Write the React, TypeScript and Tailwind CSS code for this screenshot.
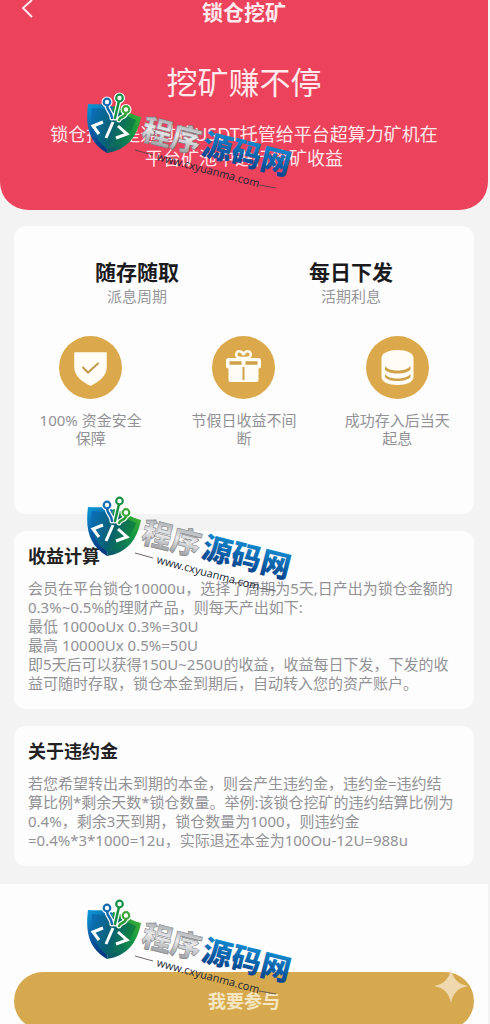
import React, { useId } from 'react';

type Props = { children?: React.ReactNode };

const stats = [
  { value: '随存随取', label: '派息周期' },
  { value: '每日下发', label: '活期利息' },
];

const calculation = [
  '会员在平台锁仓10000u，选择了周期为5天,日产出为锁仓金额的',
  '0.3%~0.5%的理财产品，则每天产出如下:',
  '最低 1000oUx 0.3%=30U',
  '最高 10000Ux 0.5%=50U',
  '即5天后可以获得150U~250U的收益，收益每日下发，下发的收',
  '益可随时存取，锁仓本金到期后，自动转入您的资产账户。',
];

const penalty = [
  '若您希望转出未到期的本金，则会产生违约金，违约金=违约结',
  '算比例*剩余天数*锁仓数量。举例:该锁仓挖矿的违约结算比例为',
  '0.4%，剩余3天到期，锁仓数量为1000，则违约金',
  '=0.4%*3*1000=12u，实际退还本金为100Ou-12U=988u',
];

function ShieldIcon() {
  return (
    <svg viewBox="0 0 63 63" className="w-full" aria-hidden="true">
      <path d="M16 17h31v14c0 9-7 14-15.500 18C23 45 16 40 16 31z" fill="#fffdf6" stroke="#fffdf6" strokeWidth="1.500" strokeLinejoin="round" />
      <path d="M24 31.500l5 5L39 27.500" fill="none" stroke="#c29a4e" strokeWidth="2" strokeLinecap="round" />
    </svg>
  );
}

function GiftIcon() {
  return (
    <svg viewBox="0 0 63 63" className="w-full" aria-hidden="true">
      <rect x="14" y="22" width="35" height="10.500" rx="2.500" fill="#fffdf6" />
      <path d="M16.500 31h30v13a2 2 0 0 1-2 2h-26a2 2 0 0 1-2-2z" fill="#fffdf6" />
      <path d="M31.500 22c-7 0-8-2-7-5 1.500-3 6-2 7 2 1-4 5.500-5 7-2 1 3 0 5-7 5z" fill="#d8a94c" stroke="#fffdf6" strokeWidth="2.500" />
      <path d="M17.500 27h12M33.500 27h12" stroke="#cfa14a" strokeWidth="3.500" />
      <path d="M31.500 31v13" stroke="#cfa14a" strokeWidth="2" />
    </svg>
  );
}

function CoinsIcon() {
  return (
    <svg viewBox="0 0 63 63" className="w-full" aria-hidden="true">
      <path d="M15.500 22c0-5 7-8 16-8s16 3 16 8v19c0 5-7 8-16 8s-16-3-16-8z" fill="#fffdf6" />
      <path d="M19 30c2 3 7 4.500 12.500 4.500S42 33 44.500 30v3.500c-2 2.500-7 4-13 4s-11-1.500-12.500-4zM19 38c2 3 7 4.500 12.500 4.500S42 41 44.500 38v3c-2 2.500-7 4-13 4s-11-1.500-12.500-4z" fill="#cfa14a" />
    </svg>
  );
}

const benefits = [
  { text: '100% 资金安全保障', icon: <ShieldIcon /> },
  { text: '节假日收益不间断', icon: <GiftIcon /> },
  { text: '成功存入后当天起息', icon: <CoinsIcon /> },
];

function Card({ children }: Props) {
  return <section className="rounded-xl bg-[#fdfdfd]">{children}</section>;
}

function InfoCard({ title, lines }: { title: string; lines: string[] }) {
  return (
    <Card>
      <div className="px-3.5 pt-3 pb-4">
        <h2 className="mb-2.5 text-[18px] leading-[26px] font-bold text-[#222]">{title}</h2>
        <p className="text-[15px] leading-[19px] whitespace-nowrap text-[#929296]">
          {lines.map((line) => (
            <span key={line} className="block">{line}</span>
          ))}
        </p>
      </div>
    </Card>
  );
}

function BrandMark() {
  const id = useId();
  const ref = (name: string) => `url(#${id}${name})`;

  return (
    <svg viewBox="0 0 230 115" className="h-[115px] w-[230px]" role="img" aria-label="程序源码网">
      <defs>
        <linearGradient id={`${id}blue`} x1="0" y1="0" x2="0.4" y2="1">
          <stop offset="0" stopColor="#0d9bd8" />
          <stop offset="0.6" stopColor="#0b559f" />
          <stop offset="1" stopColor="#073a80" />
        </linearGradient>
        <linearGradient id={`${id}green`} x1="1" y1="0" x2="0.2" y2="1">
          <stop offset="0" stopColor="#4cb82c" />
          <stop offset="0.5" stopColor="#119447" />
          <stop offset="1" stopColor="#0a5a68" />
        </linearGradient>
        <linearGradient id={`${id}inner`} x1="0" y1="0.2" x2="1" y2="0.5">
          <stop offset="0" stopColor="#0b6db5" />
          <stop offset="0.5" stopColor="#086070" />
          <stop offset="1" stopColor="#128a35" />
        </linearGradient>
        <linearGradient id={`${id}silver`} x1="0" y1="0" x2="0" y2="1">
          <stop offset="0.2" stopColor="#a5a8ab" />
          <stop offset="0.5" stopColor="#ececee" />
          <stop offset="0.9" stopColor="#94979a" />
        </linearGradient>
        <linearGradient id={`${id}word`} x1="0" y1="0" x2="0" y2="1">
          <stop offset="0.2" stopColor="#138bd0" />
          <stop offset="0.9" stopColor="#073f88" />
        </linearGradient>
      </defs>

      <path d="M13 19c10 1 18-1 25 3L32 68C15 58 10 43 13 19z" fill={ref('blue')} />
      <path d="M38 21c9 1 16 8 28 11C62 52 52 65 32 68z" fill={ref('green')} />
      <path d="M17 23c8 1 16 0 21 3 8 1 15 6 23 9-5 15-14 25-29 29C19 54 15 41 17 23z" fill={ref('inner')} />

      <g fill="none" strokeLinecap="round" strokeLinejoin="round">
        <g stroke="#fff" strokeWidth="5">
          <path d="M32 20c0 6 5 7 5 13M44 16l-4 17M51 28c-1 5-6 3-7 7" />
          <circle cx="32" cy="17" r="3" />
          <circle cx="44.500" cy="13" r="3" />
          <circle cx="51" cy="24.500" r="3" />
        </g>
        <path d="M32 20c0 6 5 7 5 13" stroke="#1268ad" strokeWidth="2.500" />
        <path d="M44 16l-4 17" stroke="#159044" strokeWidth="2.500" />
        <path d="M51 28c-1 5-6 3-7 7" stroke="#299b37" strokeWidth="2.500" />
        <circle cx="32" cy="17" r="3.300" fill="#fff" stroke="#146bb4" strokeWidth="2.200" />
        <circle cx="44.500" cy="13" r="3.300" fill="#fff" stroke="#159044" strokeWidth="2.200" />
        <circle cx="51" cy="24.500" r="3.300" fill="#fff" stroke="#3aa637" strokeWidth="2.200" />
      </g>
      <path d="M28 37l-10 4 6 8M38 37l-7 16M43 41l9 8-11 4" fill="none" stroke="#fff" strokeWidth="3" />

      <g transform="translate(65 54) rotate(14)">
        <text className="font-['Noto_Sans_CJK_SC',sans-serif] text-[30px] font-black" fill={ref('silver')} stroke="#77797c" strokeWidth="0.500">程序</text>
        <text x="62" className="font-['Noto_Sans_CJK_SC',sans-serif] text-[30px] font-black" fill={ref('word')}>源码网</text>
      </g>
      <text transform="translate(81 75) rotate(15)" className="font-['Open_Sans',sans-serif] text-[11px] font-medium" fill="#202733">www.cxyuanma.com</text>
      <path d="M60 65l18 5M184 100l17 3" stroke="#4b4046" strokeWidth="0.800" />
    </svg>
  );
}

export default function App() {
  return (
    <div className="relative min-h-screen overflow-hidden bg-[#f3f3f4] font-['Noto_Sans','Noto_Sans_CJK_SC',sans-serif]">
      <header className="mr-0.5 rounded-b-[28px] bg-[#ec425b] pb-10 text-center text-[#ffe9ec]">
        <div className="grid h-6 grid-cols-3 items-center px-4">
          <button type="button" aria-label="返回" className="w-6">
            <svg viewBox="0 0 24 24" className="size-6" fill="none" stroke="currentColor" strokeWidth="2">
              <path d="M16 0L7 8l9 9" />
            </svg>
          </button>
          <h1 className="text-[21px] leading-6 font-bold whitespace-nowrap">锁仓挖矿</h1>
        </div>
        <p className="mt-9 text-[31px] leading-[44px]">挖矿赚不停</p>
        <p className="mt-[18px] text-[18px] leading-6">
          锁仓挖矿是通过将USDT托管给平台超算力矿机在
          <br />
          平台矿池中进行挖矿收益
        </p>
      </header>

      <main className="mr-0.5 flex flex-col gap-[17px] px-3.5 pt-4 pb-[18px]">
        <Card>
          <div className="grid grid-cols-2 px-4 pt-8 text-center">
            {stats.map((item) => (
              <div key={item.value}>
                <p className="text-[21px] leading-7 font-bold text-[#1b1b1d]">{item.value}</p>
                <p className="text-[15px] leading-5 text-[#97979b]">{item.label}</p>
              </div>
            ))}
          </div>
          <ul className="mt-[30px] grid grid-cols-3 pb-[67px] text-center">
            {benefits.map((item) => (
              <li key={item.text} className="flex flex-col items-center gap-3">
                <span className="size-[63px] rounded-full bg-[#dba94b]">{item.icon}</span>
                <span className="w-28 text-[15px] leading-[18px] text-[#929296]">{item.text}</span>
              </li>
            ))}
          </ul>
        </Card>
        <InfoCard title="收益计算" lines={calculation} />
        <InfoCard title="关于违约金" lines={penalty} />
      </main>

      <footer className="mr-0.5 bg-[#fdfdfd] px-3.5 pt-[88px]">
        <button type="button" className="h-[58px] w-full rounded-full bg-[#d7a94e] text-[18px] font-bold text-[#f5e6c2]">
          我要参与
        </button>
      </footer>

      <div className="pointer-events-none absolute top-[85px] left-[75px] flex flex-col gap-[288px]">
        <BrandMark />
        <BrandMark />
        <BrandMark />
      </div>
      <svg viewBox="0 0 34 34" className="pointer-events-none absolute top-[969px] right-[22px] size-[34px]" aria-hidden="true">
        <path d="M17 0c2 10 7 15 17 17-10 2-15 7-17 17C15 24 10 19 0 17 10 15 15 10 17 0z" fill="#f3dfbf" fillOpacity="0.85" />
      </svg>
    </div>
  );
}
